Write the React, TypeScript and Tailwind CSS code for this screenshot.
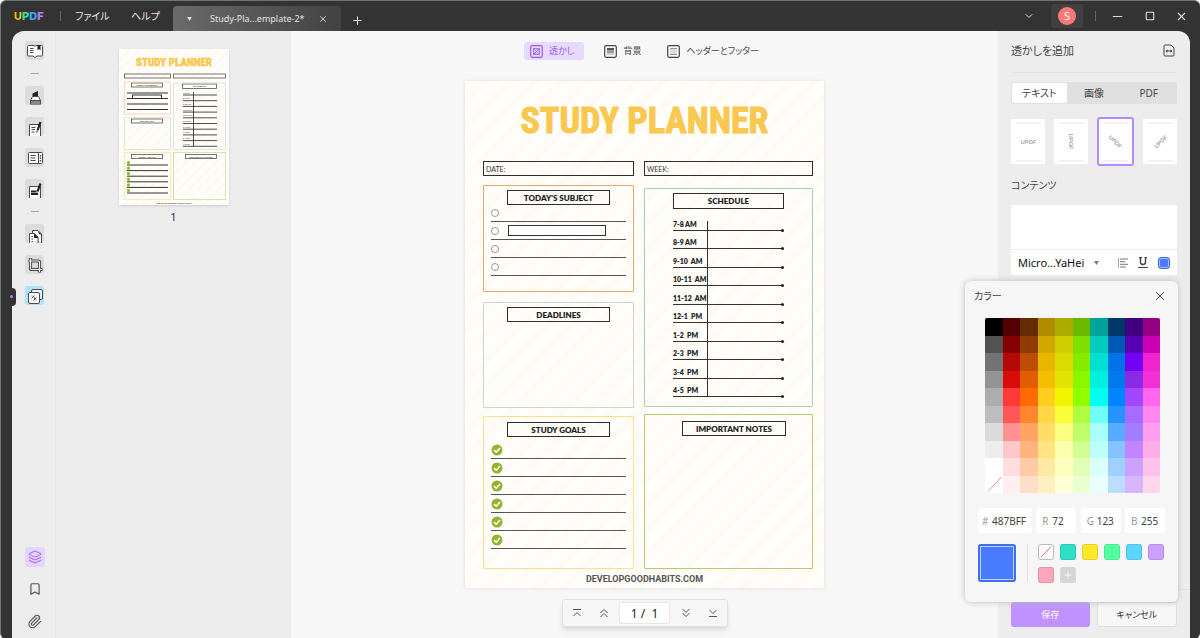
import type { ReactNode } from "react"
import clsx from "clsx"
import { ChevronDown, Layers, Minus, Paperclip, Plus, Square, X, Bookmark } from "lucide-react"

const paletteRows = [
  ["#000000", "#520000", "#662b00", "#b08c00", "#adad00", "#69ba00", "#00a399", "#00386b", "#400080", "#940082"],
  ["#525252", "#850000", "#8f3b00", "#d1a700", "#cfcf00", "#7de000", "#00ccbe", "#0059b3", "#5700b3", "#cc00b3"],
  ["#737373", "#b50808", "#bd4d00", "#e8b500", "#dbdb00", "#85eb00", "#00e0d1", "#0073e6", "#7600f5", "#f024cf"],
  ["#949494", "#d90b0b", "#e05e00", "#f5bf00", "#e3e300", "#88f700", "#00f0e0", "#007aeb", "#8a29e6", "#f230d6"],
  ["#adadad", "#ff3838", "#ff6b00", "#ffce1f", "#f3f500", "#91ff00", "#00fff2", "#0085ff", "#a347ff", "#ff66ed"],
  ["#bdbdbd", "#ff5757", "#ff852e", "#ffd747", "#fbff38", "#aeff42", "#70fff7", "#2694ff", "#a66bff", "#ff87ef"],
  ["#dbdbdb", "#ff9191", "#ffa463", "#ffdd66", "#fcff80", "#bfff6b", "#a6fffa", "#54abff", "#a37dff", "#ff9eec"],
  ["#ededed", "#ffc7c7", "#ffb37d", "#ffe385", "#fcffab", "#d2ff94", "#bdfffb", "#85c2ff", "#c285ff", "#ffade8"],
  ["#ffffff", "#ffdedf", "#ffcba6", "#ffeaa3", "#fdffbf", "#e0ffb8", "#dbfffd", "#9fd0ff", "#cba3ff", "#ffc2ed"],
  ["none", "#ffeff0", "#ffdec7", "#fff0c2", "#fdffd6", "#ebffd1", "#e8fffe", "#badeff", "#d7b5ff", "#ffd6ed"],
]

const recentColors = ["#2fe0c8", "#ffe829", "#55ffa0", "#5cd8ff", "#cba3ff", "#ffa6be"]

const scheduleHours = [
  "7-8 AM",
  "8-9 AM",
  "9-10  AM",
  "10-11  AM",
  "11-12  AM",
  "12-1  PM",
  "1-2  PM",
  "2-3  PM",
  "3-4  PM",
  "4-5  PM",
]

const rgbFields = [
  { id: "r", label: "R", value: "72" },
  { id: "g", label: "G", value: "123" },
  { id: "b", label: "B", value: "255" },
]

const watermarkStyles = [
  { id: "flat", label: "水平", angle: 0 },
  { id: "vertical", label: "垂直", angle: 90 },
  { id: "down", label: "右下がり", angle: 45 },
  { id: "up", label: "右上がり", angle: -45 },
]

/* ---------- icons ---------- */

const Icon = ({ children }: { children: ReactNode }) => (
  <svg viewBox="0 0 18 18" className="size-[18px]" fill="none" stroke="#4a4a4a" strokeWidth="1">
    {children}
  </svg>
)

const ReaderIcon = () => (
  <Icon>
    <path d="M2.5 3.5h5.500l1 .8 1-.8h5.500a1 1 0 0 1 1 1v8.500a1 1 0 0 1-1 1H11l-2 1.500-2-1.500H2.500a1 1 0 0 1-1-1v-8.500a1 1 0 0 1 1-1z" fill="#fff" />
    <path d="M4 6.500h3.500M4 8.500h3.500M4 10.500h3.500" />
    <path d="M11.500 3h3v5.500L13 7l-1.500 1.500z" fill="#222" stroke="none" />
  </Icon>
)

const MarkerIcon = () => (
  <Icon>
    <path d="M4.500 17.500v-4l2-4h6l2 4v4" fill="#fff" />
    <path d="M6.500 9V6.500L12 4v5z" fill="#222" stroke="none" />
    <path d="M5 14h9v4H5z" fill="#8a8a8a" stroke="none" />
    <path d="M4.500 13.500h10" />
  </Icon>
)

const EditIcon = () => (
  <Icon>
    <path d="M3.500 18V6.500h11V18" fill="#fff" />
    <path d="M5.500 9.500h4M5.500 11.500h3.500M5.500 14h3" />
    <path d="M14.500 4l-3 8.500" stroke="#222" strokeWidth="2.200" />
    <path d="M11.200 13l-.4 1.500" stroke="#222" />
  </Icon>
)

const FormIcon = () => (
  <Icon>
    <rect x="2.500" y="3.500" width="14" height="11" rx="1" fill="#fff" />
    <path d="M12.500 3.500v11M4.500 6.500h5M4.500 9h5M4.500 11.500h5" />
    <path d="M14.500 6v1.500M14.500 8.500V10M14.500 11v1.500" strokeWidth="1.500" />
  </Icon>
)

const RedactIcon = () => (
  <Icon>
    <path d="M3.500 18V6.500h11V18" fill="#fff" />
    <path d="M5 11.500h5.500M5 14h7" stroke="#222" strokeWidth="1.800" />
    <path d="M14.500 3.500l-3 8" stroke="#222" strokeWidth="2.200" />
    <path d="M11 12.500l-.5 2" stroke="#222" />
  </Icon>
)

const PagesIcon = () => (
  <Icon>
    <path d="M6.500 8V5.500H12l3.500 3.500v9" fill="#fff" />
    <path d="M3.500 18V8.500h5l3.500 3.500v6" fill="#fff" />
    <path d="M8 8.500L12.500 13H8zM11.500 5.500L16 10l-3-1z" fill="#222" stroke="none" />
    <path d="M5.500 11.500H7M5.500 14H7M5.500 16.500H7" />
  </Icon>
)

const CropIcon = () => (
  <Icon>
    <path d="M4.500 2v10.500a1 1 0 0 0 1 1H16.500M2.500 5h10a1 1 0 0 1 1 1v10.500" strokeWidth="3.200" />
    <path d="M4.500 2.500v10a1 1 0 0 0 1 1H16M3 5h9.500a1 1 0 0 1 1 1v10" stroke="#ededed" strokeWidth="1.200" />
  </Icon>
)

const WatermarkToolIcon = () => (
  <Icon>
    <rect x="5.500" y="2.500" width="11" height="10" rx="1.500" fill="#e6f6ff" />
    <rect x="2.500" y="5.500" width="11" height="11" rx="1.500" fill="#fff" />
    <path d="M5.500 11.500l3-3M7.500 13.500l3-3M6 9.500v-1M10 13.500v-1M8 10l1 2" />
  </Icon>
)

const railTools = [
  { label: "コメント", icon: <MarkerIcon /> },
  { label: "編集", icon: <EditIcon /> },
  { label: "フォーム", icon: <FormIcon /> },
  { label: "墨消し", icon: <RedactIcon /> },
]

const pageTools = [
  { label: "ページ整理", icon: <PagesIcon /> },
  { label: "トリミング", icon: <CropIcon /> },
  { label: "ページツール", icon: <WatermarkToolIcon />, active: true },
]

const RailButton = ({ label, icon, active }: { label: string; icon: ReactNode; active?: boolean }) => (
  <button
    aria-label={label}
    className={clsx(
      "flex size-[19px] items-center justify-center rounded-[3px]",
      active ? "bg-[#b3e0fa]" : "bg-[#dcdcdc]",
    )}
  >
    {icon}
  </button>
)

/* ---------- title bar ---------- */

const TitleBar = () => (
  <header className="flex h-[30px] shrink-0 items-center text-[#e4e4e4]">
    <div className="w-[47px] pl-[13px] font-['Inter'] text-[11px] font-extrabold leading-4">
      <span className="bg-linear-to-r from-[#ffb000] to-[#d8d01f] bg-clip-text text-transparent">U</span>
      <span className="text-[#3fe08a]">P</span>
      <span className="text-[#35a8f0]">D</span>
      <span className="text-[#b982ff]">F</span>
    </div>
    <span className="ml-3 h-2.5 w-px bg-[#666]" />
    <nav className="ml-3.5 flex text-[10px] leading-4">
      <button className="w-14 text-left">ファイル</button>
      <button className="w-[42px] text-left">ヘルプ</button>
    </nav>
    <div className="flex h-[25px] w-[168px] items-center self-end rounded-t bg-linear-to-r from-[#6a6a6a] to-[#424242]">
      <svg viewBox="0 0 6 5" className="ml-3.5 h-1 w-[5px]" fill="#ddd">
        <path d="M0 0h6L3 5z" />
      </svg>
      <span className="ml-[18px] w-[104px] whitespace-nowrap text-[9px] leading-4">Study-Pla...emplate-2*</span>
      <button aria-label="タブを閉じる" className="ml-1">
        <X size={10} strokeWidth={2} />
      </button>
    </div>
    <button aria-label="新しいタブ" className="ml-2.5 mt-2">
      <Plus size={13} strokeWidth={2} />
    </button>
    <div className="ml-auto flex items-center pr-3">
      <button aria-label="メニュー">
        <ChevronDown size={12} strokeWidth={2} />
      </button>
      <button aria-label="アカウント" className="ml-4 flex h-6 w-8 items-center justify-center rounded-[3px] bg-[#404040]">
        <span className="flex size-[18px] items-center justify-center rounded-full bg-[#ff7878] text-[11px] leading-4 text-white">
          S
        </span>
      </button>
      <span className="ml-3 h-2.5 w-px bg-[#666]" />
      <button aria-label="最小化" className="ml-3.5">
        <Minus size={15} strokeWidth={1.500} />
      </button>
      <button aria-label="最大化" className="ml-5">
        <Square size={10} strokeWidth={2.500} />
      </button>
      <button aria-label="閉じる" className="ml-5">
        <X size={13} strokeWidth={2} />
      </button>
    </div>
  </header>
)

/* ---------- left side ---------- */

const Rail = () => (
  <aside className="relative flex w-11 shrink-0 flex-col items-center rounded-tl-xl border-r border-[#e6e6e6] bg-[#ededed] pt-2.5 pb-2 pl-0.5">
    <RailButton label="リーダー" icon={<ReaderIcon />} />
    <div className="flex h-[26px] items-center">
      <span className="h-px w-2 bg-[#a5a5a5]" />
    </div>
    <div className="flex flex-col gap-3">
      {railTools.map((tool) => (
        <RailButton key={tool.label} {...tool} />
      ))}
    </div>
    <div className="flex h-[26px] items-center">
      <span className="h-px w-2 bg-[#a5a5a5]" />
    </div>
    <div className="flex flex-col gap-3">
      {pageTools.map((tool) => (
        <RailButton key={tool.label} {...tool} />
      ))}
    </div>
    <div className="mt-auto flex flex-col gap-3 text-[#555]">
      <button aria-label="サムネイル" className="flex size-5 items-center justify-center rounded-[3px] bg-[#e6d6ff] text-[#a66cf5]">
        <Layers size={14} strokeWidth={1.800} />
      </button>
      <button aria-label="ブックマーク" className="flex size-5 items-center justify-center">
        <Bookmark size={14} strokeWidth={2} />
      </button>
      <button aria-label="添付ファイル" className="flex size-5 items-center justify-center">
        <Paperclip size={15} strokeWidth={1.800} />
      </button>
    </div>
    <span className="absolute top-[257px] left-0 h-[18px] w-1 rounded-r-full bg-[#333]" />
    <span className="absolute top-[264px] -left-0.5 size-[3px] rounded-full bg-[#b57cff]" />
  </aside>
)

const PageThumbnail = () => (
  <svg viewBox="0 0 110 156" className="h-[156px] w-[110px] shadow-sm" fill="none" fontFamily="Lato, sans-serif">
    <defs>
      <pattern id="thumb-stripes" width="7" height="7" patternUnits="userSpaceOnUse" patternTransform="rotate(45)">
        <rect width="7" height="7" fill="#fffefa" />
        <rect width="3" height="7" fill="#fdf9f3" />
      </pattern>
    </defs>
    <rect width="110" height="156" fill="url(#thumb-stripes)" />
    <text
      x="55"
      y="17"
      textAnchor="middle"
      fontSize="11"
      fontWeight="700"
      fontFamily="'Roboto Condensed', 'Open Sans Condensed', 'Noto Sans Condensed', 'Liberation Sans', sans-serif"
      fill="#f8c84e"
      stroke="#f8c84e"
      strokeWidth="0.500"
    >
      STUDY PLANNER
    </text>
    <g stroke="#555" strokeWidth="0.800">
      <rect x="5.500" y="25" width="46" height="4" />
      <rect x="54.500" y="25" width="52" height="4" />
      <rect x="12.500" y="34" width="31" height="4" />
      <rect x="63.500" y="35" width="34" height="4.500" />
      <rect x="12.500" y="70" width="31" height="4" />
      <rect x="12.500" y="105.500" width="31" height="4" />
      <rect x="66.500" y="105.500" width="31" height="4" />
    </g>
    <rect x="5.500" y="33" width="46" height="32" stroke="#f9cdb0" strokeWidth="0.800" />
    <rect x="5.500" y="68.500" width="46" height="32" stroke="#d5e2dc" strokeWidth="0.800" />
    <rect x="5.500" y="103.500" width="46" height="47" stroke="#fbe6a0" strokeWidth="0.800" />
    <rect x="54.500" y="34" width="52" height="66.500" stroke="#cfe2d8" strokeWidth="0.800" />
    <rect x="54.500" y="103.500" width="52" height="47" stroke="#cfdd9e" strokeWidth="0.800" />
    {[44, 49.500, 55, 60.500].map((y) => (
      <path key={y} d={`M8 ${y}h41`} stroke="#333" strokeWidth="1" />
    ))}
    <rect x="13.500" y="46" width="29" height="3.500" fill="#fff" stroke="#333" />
    {scheduleHours.map((hour, i) => (
      <g key={hour}>
        <text x="64" y={44.500 + i * 5.700} fontSize="2" fontWeight="700" fill="#444">
          {hour}
        </text>
        <path d={`M64 ${46 + i * 5.700}h34`} stroke="#222" strokeWidth="0.800" />
      </g>
    ))}
    <path d="M74.500 43v54" stroke="#222" strokeWidth="0.800" />
    {[0, 1, 2, 3, 4, 5].map((i) => (
      <g key={i}>
        <circle cx="9.500" cy={113.500 + i * 5.600} r="1.600" fill="#8cb82e" />
        <path d={`M8 ${116 + i * 5.600}h41`} stroke="#333" strokeWidth="1" />
      </g>
    ))}
    <g fill="#444" fontSize="2.500" fontWeight="700" textAnchor="middle">
      <text x="28" y="37">TODAY'S SUBJECT</text>
      <text x="80.500" y="38.200">SCHEDULE</text>
      <text x="28" y="73">DEADLINES</text>
      <text x="28" y="108.500">STUDY GOALS</text>
      <text x="82" y="108.500">IMPORTANT NOTES</text>
      <text x="55" y="154.500">DEVELOPGOODHABITS.COM</text>
    </g>
  </svg>
)

const ThumbnailPanel = () => (
  <section className="flex w-[235px] shrink-0 flex-col items-center bg-[#ededed] pt-[18px]">
    <PageThumbnail />
    <span className="mt-1 text-[11px] leading-4 text-[#16325a]">1</span>
  </section>
)

/* ---------- document ---------- */

const BoxTitle = ({ children, className }: { children: ReactNode; className?: string }) => (
  <h3
    className={clsx(
      "flex items-center justify-center border border-[#2d2d2d] font-['Lato'] text-[8px] font-extrabold leading-3 text-[#222]",
      className,
    )}
  >
    {children}
  </h3>
)

const Check = () => (
  <svg viewBox="0 0 12 12" className="size-3">
    <circle cx="6" cy="6" r="5.500" fill="#91b52d" />
    <path d="M3 6.200l2.200 2L9 4" fill="none" stroke="#fff" strokeWidth="1.600" />
  </svg>
)

const StudyPlanner = () => (
  <article className="mx-auto flex h-[507px] w-[359px] flex-col bg-[repeating-linear-gradient(135deg,#fffefb_0px,#fffefb_10px,#fefaf4_11px,#fefaf4_17px,#fffefb_18px)] shadow-[0_0_4px_#ddd]">
    <h1 className="h-20 pt-4 text-center font-['Roboto_Condensed','Open_Sans_Condensed','Noto_Sans_Condensed','Liberation_Sans',sans-serif] text-[36px] font-bold leading-[48px] whitespace-nowrap text-[#f9c851] [-webkit-text-stroke:1px_#f9c851]">
      STUDY PLANNER
    </h1>
    <div className="flex gap-2.5 pr-[11px] pl-[18px]">
      <div className="flex w-[151px] flex-col">
        <div className="flex h-[15px] items-center border border-[#2d2d2d] pl-0.5 font-['Lato'] text-[7px] leading-3 text-[#333]">
          DATE:
        </div>
        <section className="mt-[9px] h-[107px] rounded-[1px] border border-[#f5a365] px-[7px] pt-1">
          <BoxTitle className="mx-auto h-[15px] w-[103px]">TODAY'S SUBJECT</BoxTitle>
          <ul className="-mt-px">
            {[0, 1, 2, 3].map((row) => (
              <li key={row} className="flex h-[18px] items-center border-b border-[#555]">
                <span className="size-2 rounded-full border border-[#999]" />
                {row === 1 && <span className="ml-[9px] h-[11px] w-[98px] border border-[#333] bg-white" />}
              </li>
            ))}
          </ul>
        </section>
        <section className="mt-2.5 h-[106px] rounded-[1px] border border-[#c8d8d0] pt-1">
          <BoxTitle className="mx-auto h-[15px] w-[103px]">DEADLINES</BoxTitle>
        </section>
        <section className="mt-2 h-[153px] rounded-[1px] border border-[#fbdf8a] px-[7px] pt-[5px]">
          <BoxTitle className="mx-auto h-[15px] w-[103px]">STUDY GOALS</BoxTitle>
          <ul className="mt-1">
            {[0, 1, 2, 3, 4, 5].map((row) => (
              <li key={row} className="flex h-[18px] items-center border-b border-[#555]">
                <Check />
              </li>
            ))}
          </ul>
        </section>
      </div>
      <div className="flex flex-1 flex-col">
        <div className="flex h-[15px] items-center border border-[#2d2d2d] pl-0.5 font-['Lato'] text-[7px] leading-3 text-[#333]">
          WEEK:
        </div>
        <section className="mt-3 h-[219px] rounded-[1px] border border-[#a8d0b4] pt-1">
          <BoxTitle className="mx-auto h-4 w-[111px]">SCHEDULE</BoxTitle>
          <ul className="mx-auto mt-[3px] flex h-[185px] w-[111px] flex-col bg-[linear-gradient(#333,#333)] bg-[length:1px_176px] bg-[position:34px_bottom] bg-no-repeat">
            {scheduleHours.map((hour) => (
              <li
                key={hour}
                className="flex flex-1 items-end border-b border-[#333] font-['Lato'] text-[7px] font-extrabold leading-3 whitespace-pre text-[#222]"
              >
                {hour}
                <span className="-mb-0.5 ml-auto size-[3px] rounded-full bg-[#222]" />
              </li>
            ))}
          </ul>
        </section>
        <section className="mt-[7px] h-[155px] rounded-[1px] border border-[#b5cc68] pt-1.5">
          <BoxTitle className="ml-[37px] h-[15px] w-[104px]">IMPORTANT NOTES</BoxTitle>
        </section>
      </div>
    </div>
    <p className="mt-1 text-center font-['Roboto'] text-[9px] font-bold leading-3 text-[#555]">DEVELOPGOODHABITS.COM</p>
  </article>
)

const ModeIcon = ({ children }: { children: ReactNode }) => (
  <svg viewBox="0 0 13 13" className="size-[13px]" fill="none" stroke="currentColor">
    <rect x="0.700" y="0.700" width="11.600" height="11.600" rx="1.500" strokeWidth="1.200" />
    {children}
  </svg>
)

const ModeBar = () => (
  <div className="flex h-[50px] shrink-0 justify-center gap-3.5 pt-[11px] text-[9px] leading-4 text-[#444]">
    <button className="flex h-[18px] items-center gap-1.5 rounded-[3px] bg-[#e8d9ff] pr-2.5 pl-1.5 text-[#9a5ce8]">
      <ModeIcon>
        <rect x="3.500" y="3.500" width="6" height="6" strokeWidth="0.800" />
        <path d="M4 4l5 5M9 4L4 9M6.500 4l2.500 2.500M4 6.500L6.500 9" strokeWidth="0.800" />
      </ModeIcon>
      透かし
    </button>
    <button className="flex h-[18px] items-center gap-1.5 px-1.5">
      <ModeIcon>
        <rect x="3" y="3" width="7" height="2.500" fill="#555" stroke="none" />
        <rect x="3" y="5.500" width="7" height="2.500" fill="#999" stroke="none" />
        <rect x="3" y="8" width="7" height="2" fill="#ccc" stroke="none" />
      </ModeIcon>
      背景
    </button>
    <button className="flex h-[18px] items-center gap-1.5 px-1.5 whitespace-nowrap">
      <ModeIcon>
        <rect x="3" y="3" width="7" height="7" fill="#ddd" stroke="none" />
        <path d="M3 3.500h7M3 9.500h7" stroke="#999" />
      </ModeIcon>
      ヘッダーとフッター
    </button>
  </div>
)

const NavIcon = ({ d }: { d: string }) => (
  <svg viewBox="0 0 10 10" className="size-2.5" fill="none" stroke="#555" strokeWidth="1">
    <path d={d} />
  </svg>
)

const PageNav = () => (
  <div className="mx-auto mt-[11px] mb-3 flex h-7 w-[166px] items-center justify-between rounded-[3px] border border-[#e2e2e2] bg-[#f6f6f6] px-[9px] shadow-md">
    <div className="flex gap-[17px]">
      <button aria-label="最初のページ">
        <NavIcon d="M1 1.500h8M1.500 8L5 4.500 8.500 8" />
      </button>
      <button aria-label="前のページ">
        <NavIcon d="M1.500 5L5 1.500 8.500 5M1.500 9L5 5.500 8.500 9" />
      </button>
    </div>
    <input
      aria-label="ページ番号"
      defaultValue="1 /  1"
      className="h-[22px] w-[51px] rounded-[3px] border border-[#e6e6e6] bg-white text-center text-[12px] leading-4 text-[#222]"
    />
    <div className="flex gap-[17px]">
      <button aria-label="次のページ">
        <NavIcon d="M1.500 1L5 4.500 8.500 1M1.500 5L5 8.500 8.500 5" />
      </button>
      <button aria-label="最後のページ">
        <NavIcon d="M1 8.500h8M1.500 2L5 5.500 8.500 2" />
      </button>
    </div>
  </div>
)

/* ---------- watermark panel ---------- */

const ColorPopup = () => (
  <div
    role="dialog"
    aria-label="カラー"
    className="absolute right-3 bottom-[37px] flex h-[321px] w-[213px] flex-col rounded-md bg-[#f6f6f6] px-[13px] shadow-[0_0_6px_#bbb]"
  >
    <div className="-mr-0.5 -ml-1 flex h-[37px] items-center justify-between pb-2">
      <h2 className="text-[10px] leading-4">カラー</h2>
      <button aria-label="カラーを閉じる" className="text-[#444]">
        <X size={14} strokeWidth={1.700} />
      </button>
    </div>
    <div className="ml-[7px] grid h-[175px] w-[175px] grid-cols-10 grid-rows-10 overflow-hidden rounded-[2px]">
      {paletteRows.flat().map((color, i) =>
        color === "none" ? (
          <button key={i} aria-label="なし" className="min-h-0 bg-white">
            <svg viewBox="0 0 18 18" className="size-full" stroke="#ff8a8a">
              <path d="M3 16L17 1" />
            </svg>
          </button>
        ) : (
          <button key={i} aria-label={color} style={{ backgroundColor: color }} />
        ),
      )}
    </div>
    <div className="mt-[15px] flex justify-between text-[10px] leading-4">
      <label className="flex h-[25px] w-[54px] items-center rounded-[3px] bg-white pl-1 text-[#999]">
        <span className="w-2.5">#</span>
        <input defaultValue="487BFF" className="w-[38px] text-[#444]" />
      </label>
      {rgbFields.map((field) => (
        <label key={field.id} className="flex h-[25px] w-10 items-center rounded-[3px] bg-white pl-1.5 text-[#999]">
          <span className="w-2.5">{field.label}</span>
          <input defaultValue={field.value} className="w-[22px] text-[#444]" />
        </label>
      ))}
    </div>
    <div className="mt-[11px] flex">
      <span className="size-[38px] rounded-[3px] border-2 border-[#3f6ff0] bg-[#487bff] shadow-[inset_0_0_0_1px_#c3d3ff]" />
      <span className="ml-[11px] h-[38px] w-px bg-[#e2e2e2]" />
      <div className="ml-2.5 grid grid-cols-6 gap-x-1.5 gap-y-[7px]">
        <button aria-label="透明" className="size-4 rounded-[3px] border border-[#bbb] bg-white">
          <svg viewBox="0 0 14 14" className="size-full" stroke="#ff7070">
            <path d="M2 12L12 2" />
          </svg>
        </button>
        {recentColors.map((color) => (
          <button
            key={color}
            aria-label={color}
            className="size-4 rounded-[3px] border border-black/10"
            style={{ backgroundColor: color }}
          />
        ))}
        <button aria-label="色を追加" className="flex size-4 items-center justify-center rounded-[3px] bg-[#d6d6d6] text-white">
          <Plus size={10} />
        </button>
      </div>
    </div>
  </div>
)

const WatermarkPanel = () => (
  <aside className="relative flex w-[192px] shrink-0 flex-col rounded-tr-xl bg-[#ededed] text-[#444]">
    <div className="flex flex-1 flex-col px-[13px]">
      <div className="flex h-[42px] items-center justify-between border-b border-[#e3e3e3] pr-0.5 pb-0.5">
        <h2 className="text-[11px] leading-4">透かしを追加</h2>
        <button aria-label="範囲">
          <svg viewBox="0 0 12 13" className="h-[13px] w-3" fill="none" stroke="#444">
            <path d="M2 1h6l3 3v7a1 1 0 0 1-1 1H2a1 1 0 0 1-1-1V2a1 1 0 0 1 1-1z" />
            <path d="M3 7h6" />
            <path d="M2.500 7l2-1.800v3.600zM9.500 7l-2-1.800v3.600z" fill="#444" stroke="none" />
          </svg>
        </button>
      </div>
      <div className="mt-[9px] flex h-[22px] rounded-[2px] bg-[#e0e0e0] p-px text-[10px] leading-4">
        <button className="flex-1 rounded-[2px] bg-white">テキスト</button>
        <button className="flex-1">画像</button>
        <button className="flex-1">PDF</button>
      </div>
      <div className="mt-3 flex h-[50px] items-center justify-between">
        {watermarkStyles.map((style) => (
          <button
            key={style.id}
            aria-label={style.label}
            className={clsx(
              "flex items-center justify-center bg-white",
              style.id === "down" ? "h-[49px] w-[37px] rounded-[3px] border-2 border-[#b68aff]" : "h-[45px] w-[34px] rounded-[1px]",
            )}
          >
            <svg viewBox="0 0 34 45" className="h-[45px] w-[33px]">
              <path d="M4 3.500h26M4 42.500h26" stroke="#e4e4e4" />
              <text
                x="17"
                y="25"
                textAnchor="middle"
                fontFamily="'Liberation Sans', sans-serif"
                fontSize="6"
                fontStyle="italic"
                fontWeight="700"
                fill="#a8a8a8"
                transform={`rotate(${style.angle} 17 22.500)`}
              >
                UPDF
              </text>
            </svg>
          </button>
        ))}
      </div>
      <label htmlFor="watermark-text" className="mt-[11px] text-[10px] leading-4">
        コンテンツ
      </label>
      <div className="mt-3 flex h-[70px] flex-col rounded-[2px] bg-white">
        <textarea id="watermark-text" className="h-[45px] resize-none border-b border-[#ececec] outline-none" />
        <div className="flex flex-1 items-center px-[7px]">
          <select aria-label="フォント" className="w-[74px] appearance-none text-[11px] leading-4 text-[#111]">
            <option>Micro...YaHei</option>
          </select>
          <svg viewBox="0 0 6 5" className="ml-0.5 h-1 w-[5px]" fill="#777">
            <path d="M0 0h6L3 5z" />
          </svg>
          <button aria-label="行揃え" className="ml-auto">
            <svg viewBox="0 0 11 10" className="h-2.5 w-[11px]" stroke="#777">
              <path d="M1.500 0v10" stroke="#aaa" />
              <path d="M3 1h8M3 3.700h5M3 6.300h8M3 9h6" />
            </svg>
          </button>
          <button aria-label="下線" className="ml-2.5">
            <svg viewBox="0 0 10 11" className="h-[11px] w-2.5" fill="none" stroke="#444">
              <path d="M2.500 0v5a2.500 2.500 0 0 0 5 0V0M1 .5h3M6.500 .5h2.500" strokeWidth="1.400" />
              <path d="M0 10.500h10" />
            </svg>
          </button>
          <button aria-label="文字色" className="ml-2.5 size-3 rounded-[3px] border border-[#3a68ea] bg-[#487bff] shadow-[inset_0_0_0_1px_#a8c0ff]" />
        </div>
      </div>
    </div>
    <div className="flex gap-[7px] border-t border-[#e0e0e0] px-[13px] pt-3 pb-3 text-[9px] leading-4">
      <button className="h-[25px] flex-1 rounded-[3px] bg-[#bf92ff] text-white">保存</button>
      <button className="h-[25px] flex-1 rounded-[3px] border border-[#dedede] bg-[#f7f7f7] text-[#333]">キャンセル</button>
    </div>
    <ColorPopup />
  </aside>
)

export default function App() {
  return (
    <div className="flex min-h-screen flex-col rounded-md border-t border-l border-[#6d7478] bg-[#333] font-['Noto_Sans','Noto_Sans_CJK_JP',sans-serif] [font-feature-settings:'palt']">
      <TitleBar />
      <div className="mr-2.5 ml-[11px] flex flex-1">
        <Rail />
        <ThumbnailPanel />
        <main className="flex min-w-0 flex-1 flex-col bg-[#f7f7f7]">
          <ModeBar />
          <StudyPlanner />
          <PageNav />
        </main>
        <WatermarkPanel />
      </div>
    </div>
  )
}
